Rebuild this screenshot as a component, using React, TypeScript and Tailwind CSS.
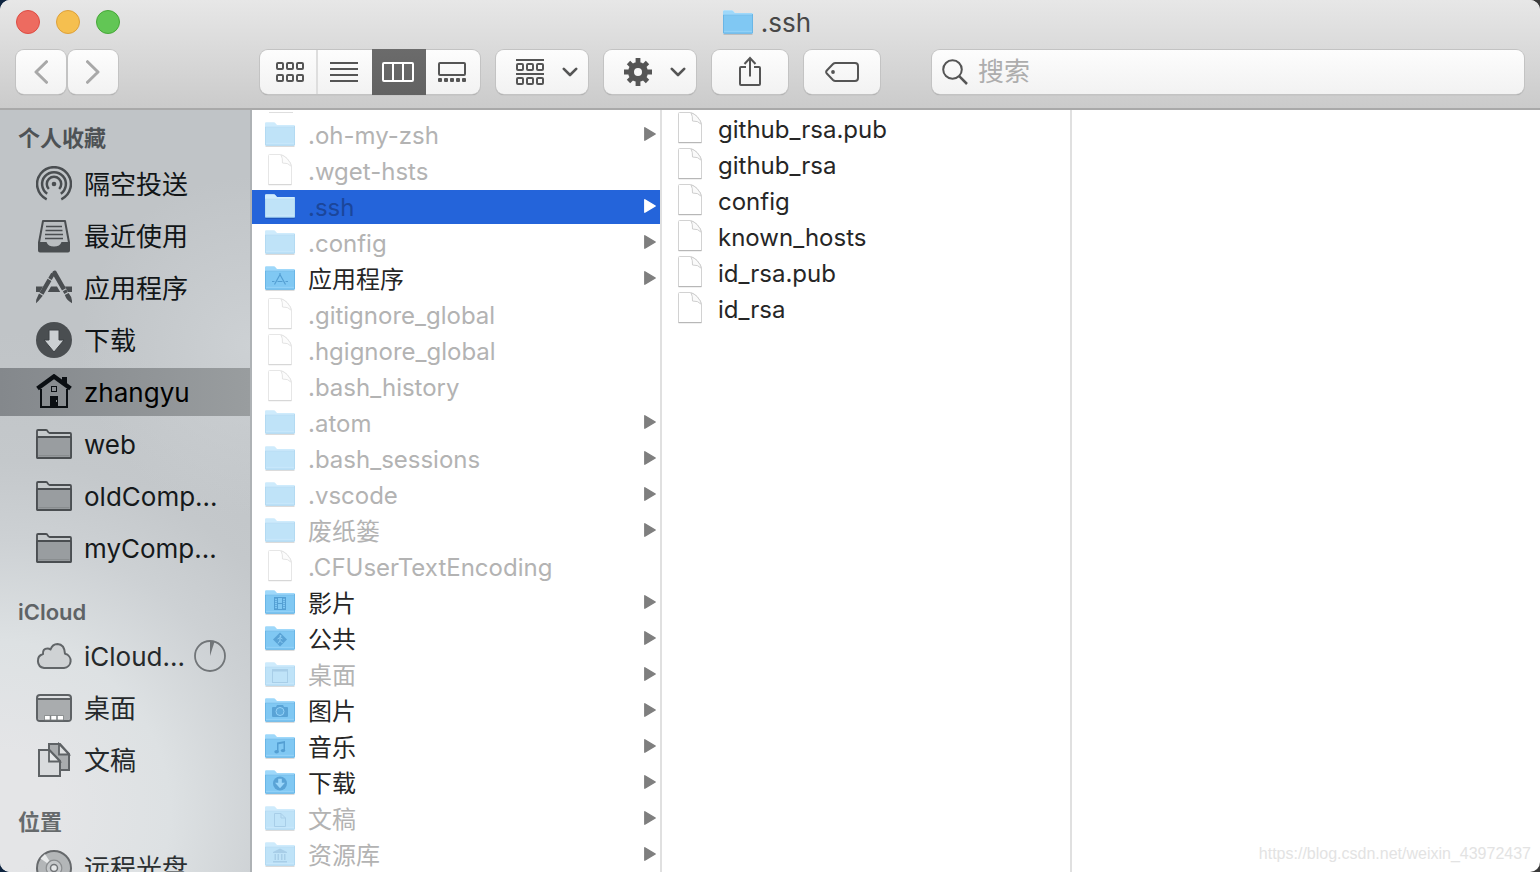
import React from "react";

type Glyph = "apps" | "movies" | "public" | "desktop" | "pictures" | "music" | "downloads" | "documents" | "library";

interface Entry {
  name: string;
  kind: "folder" | "file";
  hidden?: boolean;
  selected?: boolean;
  glyph?: Glyph;
}

const homeEntries: Entry[] = [
  { name: ".oh-my-zsh", kind: "folder", hidden: true },
  { name: ".wget-hsts", kind: "file", hidden: true },
  { name: ".ssh", kind: "folder", hidden: true, selected: true },
  { name: ".config", kind: "folder", hidden: true },
  { name: "应用程序", kind: "folder", glyph: "apps" },
  { name: ".gitignore_global", kind: "file", hidden: true },
  { name: ".hgignore_global", kind: "file", hidden: true },
  { name: ".bash_history", kind: "file", hidden: true },
  { name: ".atom", kind: "folder", hidden: true },
  { name: ".bash_sessions", kind: "folder", hidden: true },
  { name: ".vscode", kind: "folder", hidden: true },
  { name: "废纸篓", kind: "folder", hidden: true },
  { name: ".CFUserTextEncoding", kind: "file", hidden: true },
  { name: "影片", kind: "folder", glyph: "movies" },
  { name: "公共", kind: "folder", glyph: "public" },
  { name: "桌面", kind: "folder", hidden: true, glyph: "desktop" },
  { name: "图片", kind: "folder", glyph: "pictures" },
  { name: "音乐", kind: "folder", glyph: "music" },
  { name: "下载", kind: "folder", glyph: "downloads" },
  { name: "文稿", kind: "folder", hidden: true, glyph: "documents" },
  { name: "资源库", kind: "folder", hidden: true, glyph: "library" },
];

const sshEntries: Entry[] = ["github_rsa.pub", "github_rsa", "config", "known_hosts", "id_rsa.pub", "id_rsa"].map(
  (name) => ({ name, kind: "file" as const }),
);

function FolderGlyph({ glyph }: { glyph: Glyph }) {
  const c = "#549fd3";
  switch (glyph) {
    case "apps":
      return (
        <g stroke={c} strokeWidth="1.2" fill="none">
          <path d="M15.600 7.500 9.500 18.500M14.400 7.500l6.100 11M7 15.500h2.500M12.500 15.500h5M20.500 15.500h2.500" />
        </g>
      );
    case "movies":
      return (
        <g stroke={c} fill="none">
          <rect x="9.5" y="7.500" width="11" height="12" strokeWidth="1" />
          <path d="M12.500 7v13M17.500 7v13M12.500 13.500h5" strokeWidth="1" />
          <path d="M11 8v12M19 8v12" strokeWidth="1.400" strokeDasharray="1 1" />
        </g>
      );
    case "public":
      return (
        <g>
          <path d="M15 6.500 22 13.500 15 20.500 8 13.500z" fill={c} opacity=".9" />
          <circle cx="15.500" cy="10" r="1" fill="#8ccdf5" />
          <path d="M12.500 13l2.500-1.500 2.500 1.500M15 11.500v3l-2 3M15 14.500l2.500 2.500" stroke="#8ccdf5" strokeWidth="1" fill="none" />
        </g>
      );
    case "desktop":
      return (
        <g stroke={c} fill="none">
          <rect x="7.500" y="7.500" width="15" height="13" />
          <path d="M7 8.500h16" strokeWidth="2" />
        </g>
      );
    case "pictures":
      return (
        <g>
          <path d="M7 10q0-1 1-1h3l1-2h6l1 2h3q1 0 1 1v8q0 1-1 1H8q-1 0-1-1z" fill={c} opacity=".9" />
          <circle cx="15" cy="13.500" r="4" fill="#5fabdd" stroke="#94d2f8" strokeWidth="1" />
        </g>
      );
    case "music":
      return (
        <g fill={c}>
          <path d="M12 8.500 20 7v2l-6.500 1.200V17.500H12z" />
          <path d="M18.500 8H20v8.500h-1.500z" />
          <ellipse cx="11.600" cy="17.800" rx="2.300" ry="1.700" />
          <ellipse cx="18" cy="16.600" rx="2.200" ry="1.700" />
        </g>
      );
    case "downloads":
      return (
        <g>
          <circle cx="15" cy="13.500" r="7" fill={c} opacity=".9" />
          <path d="M13.200 8.800h3.600v4H20L15 18.200l-5-5.400h3.200z" fill="#9ad6fa" />
        </g>
      );
    case "documents":
      return <path d="M9.500 7.500h6.500l4.500 4.500v8.500h-11zM16 7.500v4.500h4.500" stroke={c} fill="none" />;
    case "library":
      return (
        <g fill={c}>
          <path d="M15 6.500 22 10v1H8v-1z" />
          <path d="M9.500 12h1.500v6H9.500zM12.500 12H14v6h-1.500zM16 12h1.500v6H16zM19 12h1.500v6H19zM8 19h14v1.500H8z" />
        </g>
      );
  }
}

function FolderIcon({ dim = false, glyph }: { dim?: boolean; glyph?: Glyph }) {
  const shape = "M0 1.500Q0 .3 1.200.3H8.500Q10 .3 10.700 1.400L11.500 2.500Q12 3 13 3H28.800Q30 3 30 4.200V22.500Q30 23.500 29 23.500H1Q0 23.500 0 22.500z";
  return (
    <svg viewBox="0 0 30 25" className="h-[25px] w-[30px] shrink-0" aria-hidden="true">
      <path d="M.5 24.300h29" stroke="#000" strokeOpacity=".18" strokeWidth="1" />
      <path d={shape} fill="#fff" />
      <g opacity={dim ? 0.5 : 1}>
        <path d={shape} fill="#9ed8fa" />
        <path d="M0 5.500H30V22.500Q30 23.500 29 23.500H1Q0 23.500 0 22.500z" fill="#80c8f3" />
        <path d="M0 5.200h30" stroke="#6fb9e8" strokeWidth=".8" />
        <path d="M.4 5v17.500q0 .8.800.8h27.600q.8 0 .8-.8V4" fill="none" stroke="#62afe0" strokeWidth=".8" />
        <path d="M1 21.300h28" stroke="#9ad7f9" strokeWidth=".8" />
        {glyph && <FolderGlyph glyph={glyph} />}
      </g>
    </svg>
  );
}

function FileIcon({ dim = false }: { dim?: boolean }) {
  return (
    <svg viewBox="0 0 30 32" className="h-8 w-[30px] shrink-0" aria-hidden="true">
      <g opacity={dim ? 0.55 : 1}>
        <path d="M4.500.500H15Q18.500.700 22 4.500 26.500 9 26.500 12.500V30.500H3.500V1.500Q3.500.500 4.500.500z" fill="#fff" stroke="#d2d2d2" />
        <path d="M16 1q1.800 3 1.500 8 5.500-.500 9 3.500-.500-3.500-4.500-8Q19 1.500 16 1z" fill="#fafafa" stroke="#cfcfcf" />
        <path d="M3.500 30.700h23" stroke="#b0b0b0" strokeWidth="1" />
      </g>
    </svg>
  );
}

function EntryRow({ entry }: { entry: Entry }) {
  const tone = entry.selected ? "text-[#1b469b]" : entry.hidden ? "text-[#b3b3b3]" : "text-[#262626]";
  return (
    <li className="py-px">
      <button
        type="button"
        className={`flex h-[34px] w-full items-center gap-[13px] pr-1 pb-0.5 pl-[13px] text-left ${tone} ${entry.selected ? "bg-[#2464da]" : ""}`}
      >
        {entry.kind === "folder" ? <FolderIcon dim={entry.hidden} glyph={entry.glyph} /> : <FileIcon dim={entry.hidden} />}
        <span className="min-w-0 flex-1 truncate pt-1">{entry.name}</span>
        {entry.kind === "folder" && (
          <svg viewBox="0 0 12 14" className="h-3.5 w-3 shrink-0" aria-hidden="true">
            <path
              d="M.8.8 11.200 7 .8 13.200z"
              fill={entry.selected ? "#fff" : "#7f7f7f"}
              stroke={entry.selected ? "#fff" : "#7f7f7f"}
              strokeWidth="1.400"
              strokeLinejoin="round"
            />
          </svg>
        )}
      </button>
    </li>
  );
}

const ink = "#4a4e51";

const AirDropIcon = () => (
  <svg viewBox="0 0 36 36" className="size-9" fill="none" stroke={ink} strokeWidth="2.500" strokeLinecap="butt">
    <path d="M10.700 33.300A16.900 16.900 0 1 1 25.300 33.300" />
    <path d="M11.200 27.800A11.900 11.900 0 1 1 24.800 27.800" />
    <path d="M12.800 23A7.200 7.200 0 1 1 23.200 23" />
    <circle cx="18" cy="18" r="2.300" fill={ink} stroke="none" />
  </svg>
);

const RecentsIcon = () => (
  <svg viewBox="0 0 36 36" className="size-9">
    <path d="M7 3h22l4 21.500v8q0 1-1 1H4q-1 0-1-1v-8z" fill="#b9bdc0" stroke={ink} strokeWidth="2" strokeLinejoin="round" />
    <path d="M3 24h7.500Q12 28.500 18 28.500T25.500 24H33v8.500q0 1-1 1H4q-1 0-1-1z" fill={ink} />
    <path d="M10 8.500h16M9.500 12.500h17M9 16.500h18M9 20.500h18" stroke={ink} strokeWidth="1.600" />
  </svg>
);

const AppsIcon = () => (
  <svg viewBox="0 0 36 36" className="size-9" fill={ink}>
    <path d="M0 16.500h7L3.800 22H0zM15 16.500h6l3.200 5.500H11.800zM29 16.500h7V22h-4z" />
    <g transform="translate(18 2) rotate(30)">
      <path d="M-2 2h4v6h-4zM-2.200 9h4.400v16h-4.400zM-2.200 26.200h4.400L1 33 0 36-1.500 33z" />
    </g>
    <g transform="translate(18 2) rotate(-30)">
      <path d="M-2.300 0Q0-2.500 2.300 0V20h-4.600zM-2 21.200h4v3h-4zM-2.200 25.400h4.400Q3.400 31 0 36-3.400 31-2.200 25.400z" />
    </g>
  </svg>
);

const DownloadIcon = () => (
  <svg viewBox="0 0 36 36" className="size-9">
    <circle cx="18" cy="18" r="18" fill={ink} />
    <path d="M13 8h10v10h5L18 30 8 18h5z" fill="#cbcfd2" stroke="#3d4144" strokeWidth="1" />
  </svg>
);

const HomeIcon = () => (
  <svg viewBox="0 0 36 36" className="size-9">
    <path d="M5 15v18h26V15" fill="none" stroke="#0b0f13" strokeWidth="2" />
    <path d="M1.500 14.500 18 2.500l16.500 12" fill="none" stroke="#0b0f13" strokeWidth="4.500" />
    <path d="M26 3h5v9l-5-4zM14 22h8v12h-8z" fill="#0b0f13" />
    <rect x="15.500" y="12.500" width="5" height="5" fill="none" stroke="#0b0f13" />
    <path d="M20.500 26v2" stroke="#8d9195" />
  </svg>
);

const SidebarFolderIcon = () => (
  <svg viewBox="0 0 36 36" className="size-9" strokeLinejoin="round">
    <path d="M1 31V5q0-1 1-1h8q1.200 0 1.700 1.300T13.500 7H34q1 0 1 1v23q0 1-1 1H2q-1 0-1-1z" fill="#c5c9cb" stroke={ink} strokeWidth="1.800" />
    <path d="M1 12q0-1 1-1h32q1 0 1 1v19q0 1-1 1H2q-1 0-1-1z" fill="#999da0" stroke={ink} strokeWidth="1.800" />
    <path d="M2.500 29.700h31" stroke="#85898c" />
  </svg>
);

const CloudIcon = () => (
  <svg viewBox="0 0 36 36" className="size-9">
    <path
      d="M8 30A7.200 7.200 0 0 1 7 16Q6.500 10.500 11.500 10.500q1.800 0 3 1Q16.500 6 21.500 6 28.500 6.300 29 15.800A7.200 7.200 0 0 1 28 30z"
      fill="#cfd2d4"
      stroke="#616568"
      strokeWidth="2"
      strokeLinejoin="round"
    />
  </svg>
);

const DesktopIcon = () => (
  <svg viewBox="0 0 36 36" className="size-9">
    <rect x="1" y="5" width="34" height="26" rx="3" fill="#dfe1e3" stroke="#5e6265" strokeWidth="2" />
    <path d="M2 9.500h32V28q0 2-2 2H4q-2 0-2-2z" fill="#a9acae" />
    <path d="M1 9h34" stroke="#5e6265" strokeWidth="1.800" />
    <path d="M8.500 25.500h19V30h-19z" fill="#fff" stroke="#7c8082" strokeWidth=".8" />
    <path d="M14.500 25.500V30M21 25.500V30" stroke="#7c8082" strokeWidth="1.500" />
  </svg>
);

const DocumentsIcon = () => (
  <svg viewBox="0 0 36 36" className="size-9" stroke="#5e6265" strokeWidth="2">
    <path d="M13 2h11l9 10v16H13z" fill="#a9acae" />
    <path d="M23 2v10.500h10z" fill="#e0e2e3" strokeWidth="1.800" />
    <path d="M3 8h10.500L24 19v15H3z" fill="#d9dbdd" />
    <path d="M13 8v11.500h11z" fill="#e6e8e9" strokeWidth="1.800" />
  </svg>
);

const DiscIcon = () => (
  <svg viewBox="0 0 36 36" className="size-9">
    <circle cx="18" cy="18" r="17" fill="#b3b6b8" stroke="#66696c" strokeWidth="2" />
    <path d="M18 18 4.500 8.500 9 4z" fill="#e8eaeb" />
    <path d="M18 18 31.500 27.500 27 32z" fill="#e8eaeb" />
    <circle cx="18" cy="18" r="7.800" fill="#c5c8ca" stroke="#8b8e90" strokeWidth="1.200" />
    <circle cx="18" cy="18" r="3.500" fill="#e4e6e7" stroke="#717477" strokeWidth="1.500" />
  </svg>
);

const ProgressRing = () => (
  <svg viewBox="0 0 32 32" className="size-8 shrink-0">
    <circle cx="16" cy="16" r="15" fill="none" stroke="#717578" strokeWidth="1.800" />
    <path d="M16 16V1q2.500 0 4.500.8z" fill="#717578" />
  </svg>
);

interface Place {
  name: string;
  icon: React.ReactNode;
  selected?: boolean;
  tone: string;
  progress?: boolean;
}

const places: { title: string; tone: string; items: Place[] }[] = [
  {
    title: "个人收藏",
    tone: "pt-2 h-12 text-[#4e5255]",
    items: [
      { name: "隔空投送", icon: <AirDropIcon />, tone: "text-[#111517]" },
      { name: "最近使用", icon: <RecentsIcon />, tone: "text-[#111517]" },
      { name: "应用程序", icon: <AppsIcon />, tone: "text-[#111517]" },
      { name: "下载", icon: <DownloadIcon />, tone: "text-[#111517]" },
      { name: "zhangyu", icon: <HomeIcon />, tone: "text-black", selected: true },
      { name: "web", icon: <SidebarFolderIcon />, tone: "text-[#15191b]" },
      { name: "oldComp...", icon: <SidebarFolderIcon />, tone: "text-[#15191b]" },
      { name: "myComp...", icon: <SidebarFolderIcon />, tone: "text-[#15191b]" },
    ],
  },
  {
    title: "iCloud",
    tone: "pt-5 h-14 text-[#5f6366]",
    items: [
      { name: "iCloud...", icon: <CloudIcon />, tone: "text-[#25292b]", progress: true },
      { name: "桌面", icon: <DesktopIcon />, tone: "text-[#25292b]" },
      { name: "文稿", icon: <DocumentsIcon />, tone: "text-[#25292b]" },
    ],
  },
  {
    title: "位置",
    tone: "pt-4 h-14 text-[#666a6c]",
    items: [{ name: "远程光盘", icon: <DiscIcon />, tone: "text-[#2c3032]" }],
  },
];

function Sidebar() {
  return (
    <nav
      aria-label="边栏"
      className="w-[252px] shrink-0 overflow-hidden border-r-2 border-[#aeb2b5] bg-[radial-gradient(circle_at_100%_31%,#d0d4d7cc_0px,#d0d4d700_170px),radial-gradient(circle_at_0%_92%,#e4e5e7_60px,#dde1e3_170px,#cdd1d4_270px,#c4c8cb_350px,#c0c4c7_480px)]"
    >
      {places.map((group) => (
        <section key={group.title}>
          <h2 className={`flex items-center pl-[18px] text-[22px] leading-8 font-semibold ${group.tone}`}>{group.title}</h2>
          <ul>
            {group.items.map((item) => (
              <li key={item.name} className="py-0.5">
                <a
                  href="#"
                  aria-current={item.selected ? "page" : undefined}
                  className={`flex h-12 items-center gap-3 pr-6 pl-9 text-[26px] ${item.tone} ${item.selected ? "bg-linear-to-r from-[#84888c] to-[#999d9f]" : ""}`}
                >
                  <span className="shrink-0">{item.icon}</span>
                  <span className="min-w-0 flex-1 pt-0.5 whitespace-nowrap">{item.name}</span>
                  {item.progress && <ProgressRing />}
                </a>
              </li>
            ))}
          </ul>
        </section>
      ))}
    </nav>
  );
}

const surface =
  "bg-linear-to-b from-[#fdfdfd] to-[#f2f2f2] shadow-[0_0_0_1px_#c3c3c3,0_1px_1px_0px_#00000055]";

function ToolButton({ label, className, children }: { label: string; className: string; children: React.ReactNode }) {
  return (
    <button type="button" aria-label={label} className={`flex h-11 items-center rounded-lg ${surface} ${className}`}>
      {children}
    </button>
  );
}

const Chevron = () => (
  <svg viewBox="0 0 16 10" className="h-2.5 w-4" fill="none" stroke="#555" strokeWidth="2.600" strokeLinecap="round" strokeLinejoin="round">
    <path d="M1.800 1.800 8 8l6.200-6.200" />
  </svg>
);

function Squares({ y }: { y: number }) {
  return (
    <>
      {[1, 11, 21].map((x) => (
        <rect key={x} x={x} y={y} width="6" height="6" rx="1" />
      ))}
    </>
  );
}

function Toolbar() {
  return (
    <div className="flex items-center px-4 pt-1.5">
      <div className="flex gap-0.5">
        <ToolButton label="后退" className="w-[50px] justify-center">
          <svg viewBox="0 0 14 24" className="h-6 w-3.5" fill="none" stroke="#a8a8a8" strokeWidth="3" strokeLinecap="round" strokeLinejoin="round">
            <path d="M12.500 1.700 2 12l10.500 10.300" />
          </svg>
        </ToolButton>
        <ToolButton label="前进" className="w-[50px] justify-center">
          <svg viewBox="0 0 14 24" className="h-6 w-3.5" fill="none" stroke="#a8a8a8" strokeWidth="3" strokeLinecap="round" strokeLinejoin="round">
            <path d="M1.500 1.700 12 12 1.500 22.300" />
          </svg>
        </ToolButton>
      </div>

      <div className="ml-[142px] flex items-center gap-4">
        <div role="group" aria-label="显示方式" className={`flex h-11 w-[220px] rounded-lg ${surface}`}>
          <button type="button" aria-label="图标" className="flex w-[58px] items-center justify-center border-r-2 border-[#dedede] pl-1">
            <svg viewBox="0 0 28 20" className="h-5 w-7" fill="none" stroke="#555" strokeWidth="2">
              <Squares y={1} />
              <Squares y={13} />
            </svg>
          </button>
          <button type="button" aria-label="列表" className="flex flex-1 items-center justify-center pr-0.5">
            <svg viewBox="0 0 28 20" className="h-5 w-7" stroke="#555" strokeWidth="2">
              <path d="M0 1h28M0 7h28M0 13h28M0 19h28" />
            </svg>
          </button>
          <button
            type="button"
            aria-label="分栏"
            aria-pressed="true"
            className="-my-px flex flex-1 items-center justify-center bg-linear-to-b from-[#6b6b6b] to-[#626262] pr-0.5"
          >
            <svg viewBox="0 0 32 20" className="h-5 w-8" fill="none" stroke="#fff" strokeWidth="2">
              <rect x="1" y="1" width="30" height="18" rx="1" />
              <path d="M11 1v18M21 1v18" />
            </svg>
          </button>
          <button type="button" aria-label="画廊" className="flex flex-1 items-center justify-center pr-0.5">
            <svg viewBox="0 0 28 20" className="h-5 w-7">
              <rect x="1" y="1" width="26" height="12" rx="1" fill="none" stroke="#555" strokeWidth="2" />
              {[0, 6, 12, 18, 24].map((x) => (
                <rect key={x} x={x} y="16" width="4" height="4" rx="1" fill="#555" />
              ))}
            </svg>
          </button>
        </div>

        <ToolButton label="分组" className="w-[92px] gap-[18px] pl-5">
          <svg viewBox="0 0 28 26" className="h-[26px] w-7" fill="none" stroke="#555" strokeWidth="2">
            <path d="M0 1h28M0 15h28" />
            <Squares y={5} />
            <Squares y={19} />
          </svg>
          <Chevron />
        </ToolButton>

        <ToolButton label="操作" className="w-[92px] gap-[18px] pl-5">
          <svg viewBox="0 0 28 28" className="size-7" fill="none" stroke="#555">
            <circle cx="14" cy="14" r="7" strokeWidth="6" />
            <path
              d="M14 0v6M14 22v6M0 14h6M22 14h6M4.500 4.500l4 4M19.500 19.500l4 4M23.500 4.500l-4 4M8.500 19.500l-4 4"
              strokeWidth="4.800"
            />
          </svg>
          <Chevron />
        </ToolButton>

        <ToolButton label="共享" className="w-[76px] justify-center">
          <svg viewBox="0 0 24 32" className="h-8 w-6" fill="none" stroke="#555" strokeWidth="2">
            <path d="M8 11H3q-1 0-1 1v16q0 1 1 1h18q1 0 1-1V12q0-1-1-1h-5" />
            <path d="M12 2v18.500M6.500 8 12 2l5.500 6" />
          </svg>
        </ToolButton>

        <ToolButton label="标签" className="w-[76px] justify-center">
          <svg viewBox="0 0 34 20" className="h-5 w-[34px]" fill="none" stroke="#555" strokeWidth="2">
            <path d="M10.500 1H30q3 0 3 3v12q0 3-3 3H10.500Q9 19 8 18L1.800 11.500Q.5 10 1.800 8.500L8 2q1-1 2.500-1z" />
            <circle cx="8" cy="10" r="1.900" fill="#555" stroke="none" />
          </svg>
        </ToolButton>
      </div>

      <div role="search" className={`ml-[52px] flex h-11 min-w-0 flex-1 items-center gap-2.5 rounded-lg pl-2.5 ${surface}`}>
        <label htmlFor="finder-search" aria-label="搜索" className="shrink-0">
          <svg viewBox="0 0 26 26" className="size-[26px]" fill="none" stroke="#555" strokeWidth="2">
            <circle cx="10.500" cy="10.500" r="9.300" />
            <path d="M17.200 17.200 25 25" strokeWidth="2.500" />
          </svg>
        </label>
        <input
          id="finder-search"
          type="search"
          placeholder="搜索"
          className="min-w-0 flex-1 bg-transparent text-[26px] leading-10 outline-none placeholder:text-[#adadad]"
        />
      </div>
    </div>
  );
}

export default function App() {
  return (
    <div className="h-screen bg-[linear-gradient(90deg,#0e2440_0%,#33363a_60%,#3a3a3a_100%)] font-['Inter','Noto_Sans_CJK_SC',sans-serif]">
      <main className="relative flex h-full flex-col overflow-hidden rounded-[10px] bg-white">
        <header className="h-[110px] shrink-0 border-b-2 border-[#a9a9a9] bg-linear-to-b from-[#e7e7e7] to-[#cbcbcb]">
          <div className="grid h-11 grid-cols-[1fr_auto_1fr] items-center px-4">
            <div className="flex gap-4">
              <button type="button" aria-label="关闭" className="size-6 rounded-full border border-[#dd4c43] bg-[#ed6b60]" />
              <button type="button" aria-label="最小化" className="size-6 rounded-full border border-[#dda03a] bg-[#f5bf4f]" />
              <button type="button" aria-label="缩放" className="size-6 rounded-full border border-[#46a738] bg-[#62c655]" />
            </div>
            <h1 className="flex items-center gap-2 pr-1.5 text-[26px] leading-8 text-[#484848]">
              <FolderIcon />
              <span className="pt-0.5">.ssh</span>
            </h1>
          </div>
          <Toolbar />
        </header>

        <div className="flex min-h-0 flex-1 text-[24px] leading-8">
          <Sidebar />
          <section aria-label="zhangyu" className="w-[410px] shrink-0 overflow-hidden border-r-2 border-[#e0e0e0]">
            <div className="h-[7px] pt-0.5 pl-[17px]">
              <div className="h-px w-6 bg-[#dedede]" />
            </div>
            <ul>
              {homeEntries.map((entry) => (
                <EntryRow key={entry.name} entry={entry} />
              ))}
            </ul>
          </section>
          <section aria-label=".ssh" className="w-[410px] shrink-0 overflow-hidden border-r-2 border-[#e0e0e0] pt-px">
            <ul>
              {sshEntries.map((entry) => (
                <EntryRow key={entry.name} entry={entry} />
              ))}
            </ul>
          </section>
        </div>

        <p className="absolute right-[9px] bottom-2 font-['Liberation_Sans',sans-serif] text-[16px] leading-5 text-[#e3e3e3]">
          https://blog.csdn.net/weixin_43972437
        </p>
      </main>
    </div>
  );
}
